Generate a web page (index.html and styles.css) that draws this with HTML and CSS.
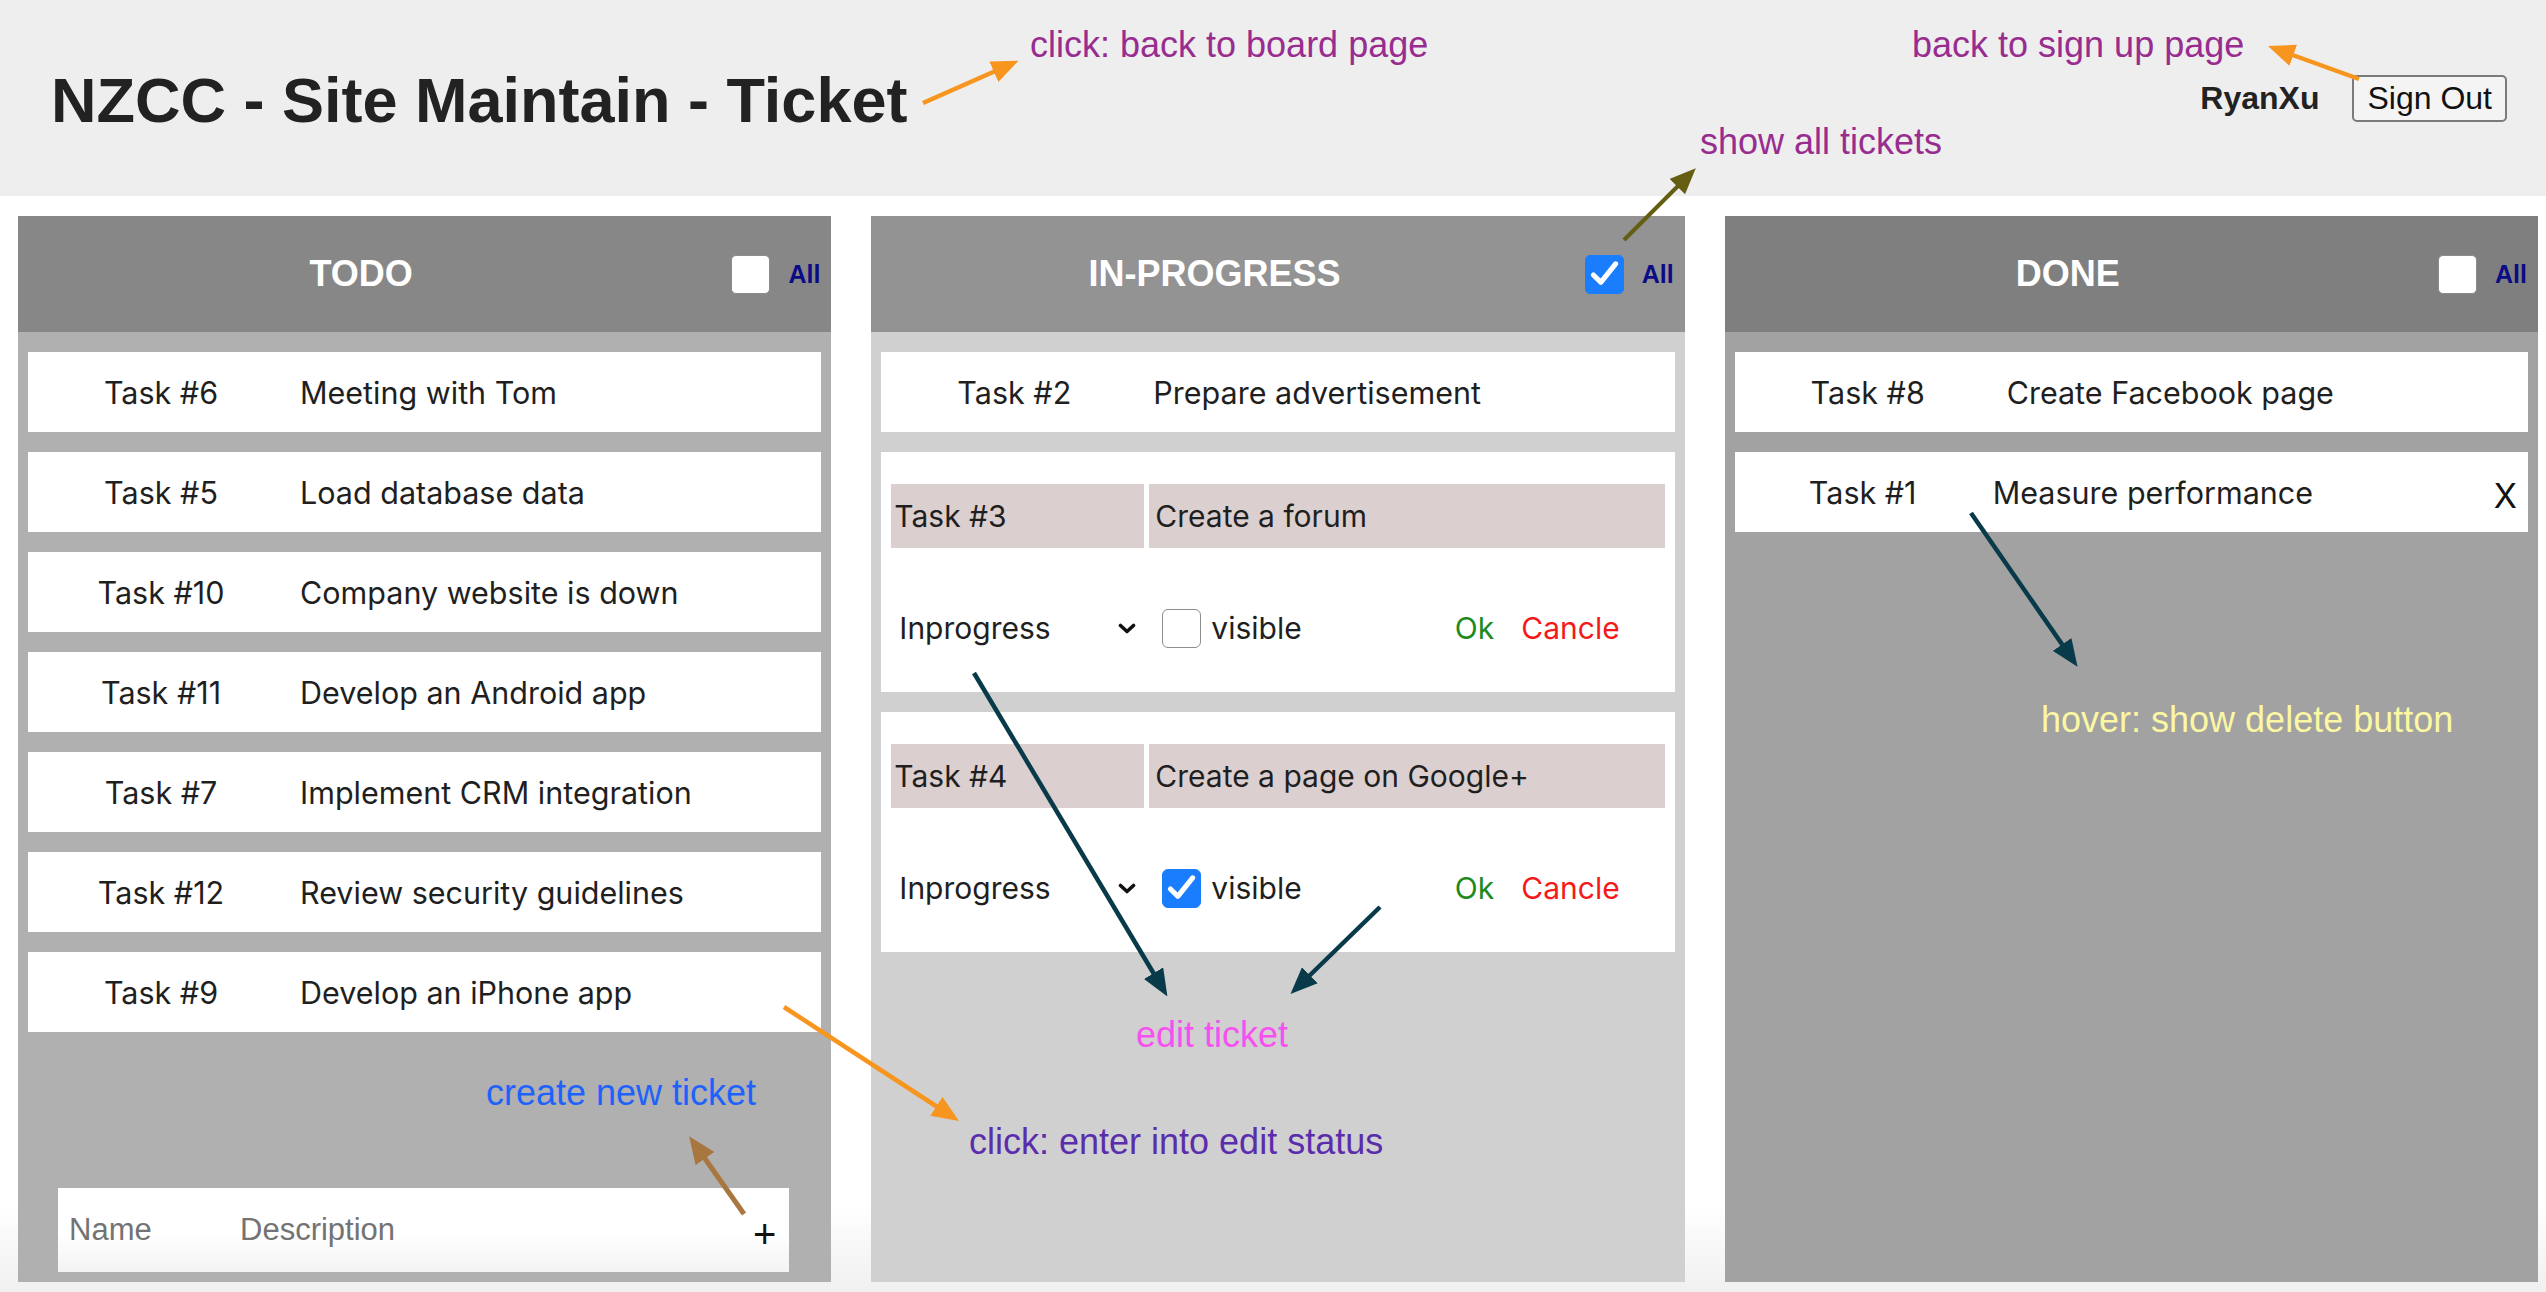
FILE: index.html
```html
<!DOCTYPE html>
<html lang="en">
<head>
<meta charset="utf-8">
<title>NZCC - Site Maintain - Ticket</title>
<link rel="stylesheet" href="styles.css">
</head>
<body>
<div class="page">
  <header class="topbar">
    <h1 class="brand">NZCC - Site Maintain - Ticket</h1>
    <div class="user">
      <span class="user-name">RyanXu</span>
      <button class="signout" type="button">Sign Out</button>
    </div>
  </header>

  <main class="board">
    <section class="column column-todo">
      <div class="column-head">
        <h2 class="column-title">TODO</h2>
        <span class="check"></span>
        <span class="all">All</span>
      </div>
      <div class="column-body">
        <div class="card"><span class="card-id">Task #6</span><span class="card-desc">Meeting with Tom</span></div>
        <div class="card"><span class="card-id">Task #5</span><span class="card-desc">Load database data</span></div>
        <div class="card"><span class="card-id">Task #10</span><span class="card-desc">Company website is down</span></div>
        <div class="card"><span class="card-id">Task #11</span><span class="card-desc">Develop an Android app</span></div>
        <div class="card"><span class="card-id">Task #7</span><span class="card-desc">Implement CRM integration</span></div>
        <div class="card"><span class="card-id">Task #12</span><span class="card-desc">Review security guidelines</span></div>
        <div class="card"><span class="card-id">Task #9</span><span class="card-desc">Develop an iPhone app</span></div>
        <form class="new-ticket">
          <input class="nt-name" type="text" placeholder="Name">
          <input class="nt-desc" type="text" placeholder="Description">
          <span class="nt-add">+</span>
        </form>
      </div>
    </section>

    <section class="column column-progress">
      <div class="column-head">
        <h2 class="column-title">IN-PROGRESS</h2>
        <span class="check is-checked"><svg viewBox="0 0 40 40" class="tick"><path d="M8 21 L16 29 L32 9" fill="none" stroke="#fff" stroke-width="5.5" stroke-linecap="round" stroke-linejoin="round"/></svg></span>
        <span class="all">All</span>
      </div>
      <div class="column-body">
        <div class="card"><span class="card-id">Task #2</span><span class="card-desc">Prepare advertisement</span></div>
        <div class="edit-card">
          <div class="edit-fields">
            <span class="field field-id">Task #3</span>
            <span class="field field-desc">Create a forum</span>
          </div>
          <div class="edit-actions">
            <span class="status-select">Inprogress<svg class="chev" viewBox="0 0 18 11"><path d="M2.5 2.5 L9 8.5 L15.5 2.5" fill="none" stroke="#111" stroke-width="3.6" stroke-linecap="round" stroke-linejoin="round"/></svg></span>
            <span class="box"></span>
            <span class="visible">visible</span>
            <span class="ok">Ok</span>
            <span class="cancel">Cancle</span>
          </div>
        </div>
        <div class="edit-card">
          <div class="edit-fields">
            <span class="field field-id">Task #4</span>
            <span class="field field-desc">Create a page on Google+</span>
          </div>
          <div class="edit-actions">
            <span class="status-select">Inprogress<svg class="chev" viewBox="0 0 18 11"><path d="M2.5 2.5 L9 8.5 L15.5 2.5" fill="none" stroke="#111" stroke-width="3.6" stroke-linecap="round" stroke-linejoin="round"/></svg></span>
            <span class="box is-checked"><svg viewBox="0 0 40 40" class="tick"><path d="M8 21 L16 29 L32 9" fill="none" stroke="#fff" stroke-width="5.5" stroke-linecap="round" stroke-linejoin="round"/></svg></span>
            <span class="visible">visible</span>
            <span class="ok">Ok</span>
            <span class="cancel">Cancle</span>
          </div>
        </div>
      </div>
    </section>

    <section class="column column-done">
      <div class="column-head">
        <h2 class="column-title">DONE</h2>
        <span class="check"></span>
        <span class="all">All</span>
      </div>
      <div class="column-body">
        <div class="card"><span class="card-id">Task #8</span><span class="card-desc">Create Facebook page</span></div>
        <div class="card is-hover"><span class="card-id">Task #1</span><span class="card-desc">Measure performance</span><span class="card-del">X</span></div>
      </div>
    </section>
  </main>

  <div class="notes">
    <span class="note note-board">click: back to board page</span>
    <span class="note note-signup">back to sign up page</span>
    <span class="note note-all">show all tickets</span>
    <span class="note note-create">create new ticket</span>
    <span class="note note-edit">edit ticket</span>
    <span class="note note-click">click: enter into edit status</span>
    <span class="note note-hover">hover: show delete button</span>
  </div>

  <svg class="arrows" width="2546" height="1292" viewBox="0 0 2546 1292">
    <defs>
      <marker id="h-orange" viewBox="0 0 12 10" refX="3" refY="5" markerWidth="6" markerHeight="5" orient="auto" markerUnits="strokeWidth"><path d="M0,0 L12,5 L0,10 z" fill="#f7951f"/></marker>
      <marker id="h-olive" viewBox="0 0 12 10" refX="3" refY="5" markerWidth="6.5" markerHeight="5.5" orient="auto" markerUnits="strokeWidth"><path d="M0,0 L12,5 L0,10 z" fill="#655e12"/></marker>
      <marker id="h-teal" viewBox="0 0 12 10" refX="3" refY="5" markerWidth="6" markerHeight="5" orient="auto" markerUnits="strokeWidth"><path d="M0,0 L12,5 L0,10 z" fill="#083a4a"/></marker>
      <marker id="h-brown" viewBox="0 0 12 10" refX="3" refY="5" markerWidth="5.5" markerHeight="4.6" orient="auto" markerUnits="strokeWidth"><path d="M0,0 L12,5 L0,10 z" fill="#a8773f"/></marker>
    </defs>
    <line x1="923" y1="103" x2="1000" y2="69" stroke="#f7951f" stroke-width="4.5" marker-end="url(#h-orange)"/>
    <line x1="2359" y1="79" x2="2287" y2="53" stroke="#f7951f" stroke-width="4.5" marker-end="url(#h-orange)"/>
    <line x1="1624" y1="240" x2="1682" y2="182" stroke="#655e12" stroke-width="4" marker-end="url(#h-olive)"/>
    <line x1="974" y1="673" x2="1157" y2="979" stroke="#083a4a" stroke-width="4.5" marker-end="url(#h-teal)"/>
    <line x1="1380" y1="907" x2="1305" y2="980" stroke="#083a4a" stroke-width="4.5" marker-end="url(#h-teal)"/>
    <line x1="1971" y1="513" x2="2066" y2="650" stroke="#083a4a" stroke-width="4.5" marker-end="url(#h-teal)"/>
    <line x1="784" y1="1007" x2="942" y2="1110" stroke="#f7951f" stroke-width="4.5" marker-end="url(#h-orange)"/>
    <line x1="744" y1="1214" x2="701" y2="1153" stroke="#a8773f" stroke-width="5" marker-end="url(#h-brown)"/>
  </svg>
</div>
</body>
</html>
```

FILE: styles.css
```css
* { box-sizing: border-box; }

html, body {
  margin: 0;
  padding: 0;
}

body {
  font-family: Inter, "Liberation Sans", sans-serif;
  background: #ffffff;
  color: #222222;
}

.page {
  position: relative;
  width: 2546px;
  height: 1292px;
  display: flex;
  flex-direction: column;
  overflow: hidden;
}

/* ---------- top bar ---------- */
.topbar {
  flex: none;
  height: 196px;
  background: #eeeeee;
  display: flex;
  align-items: center;
  justify-content: space-between;
  padding: 0 39px 0 51px;
}

.brand {
  margin: 4px 0 0;
  font: 700 63px/1 "Liberation Sans", Arial, sans-serif;
  color: #222222;
}

.user {
  display: flex;
  align-items: center;
  gap: 33px;
}

.user-name {
  font: 700 32px/1 "Liberation Sans", Arial, sans-serif;
  color: #222222;
}

.signout {
  height: 47px;
  padding: 0 13px;
  font: 400 32px/1 "Liberation Sans", Arial, sans-serif;
  color: #111111;
  background: #f4f4f4;
  border: 2px solid #7b7b7b;
  border-radius: 5px;
}

/* ---------- board ---------- */
.board {
  flex: 1;
  display: grid;
  grid-template-columns: repeat(3, 1fr);
  column-gap: 40px;
  padding: 20px 8px 10px 18px;
  background: linear-gradient(to bottom, #ffffff 92%, #f0f0f0 100%);
}

.column {
  display: flex;
  flex-direction: column;
  min-height: 0;
}

.column-head {
  flex: none;
  height: 116px;
  display: flex;
  align-items: center;
  padding-right: 11px;
}

.column-todo .column-head { background: #878787; }
.column-progress .column-head { background: #939393; }
.column-done .column-head { background: #7f7f7f; }

.column-title {
  flex: 1;
  margin: 0;
  text-align: center;
  font: 700 36px/1 "Liberation Sans", Arial, sans-serif;
  color: #ffffff;
}

.check {
  width: 39px;
  height: 39px;
  margin-left: 27px;
  border-radius: 5px;
  background: #ffffff;
  border: 1px solid #8c8c8c;
  display: flex;
  align-items: center;
  justify-content: center;
}

.check.is-checked,
.box.is-checked {
  background: #1a7dfd;
  border-color: #1a7dfd;
}

.tick {
  width: 38px;
  height: 38px;
}

.all {
  margin-left: 18px;
  font: 700 25px/1 "Liberation Sans", Arial, sans-serif;
  color: #0b0b86;
}

.column-body {
  flex: 1;
  display: flex;
  flex-direction: column;
  gap: 20px;
  padding: 20px 10px 10px;
}

.column-todo .column-body { background: #b0b0b0; }
.column-progress .column-body { background: #d0d0d0; }
.column-done .column-body { background: #a2a2a2; }

/* ---------- cards ---------- */
.card {
  flex: none;
  height: 80px;
  background: #ffffff;
  display: flex;
  align-items: center;
  font-size: 30.5px;
  color: #1f1f1f;
}

.card-id {
  flex: none;
  width: 266px;
  text-align: center;
}

.card-desc {
  padding-left: 6px;
}

.card.is-hover .card-id { width: 256px; }
.card.is-hover .card-desc { padding-left: 2px; }

.card-del {
  margin-left: auto;
  padding-right: 11px;
  font-size: 34px;
  color: #111111;
  padding-top: 6px;
}

/* ---------- edit card ---------- */
.edit-card {
  flex: none;
  height: 240px;
  background: #ffffff;
  padding: 32px 10px 0;
  font-size: 30px;
  color: #1f1f1f;
}

.edit-fields {
  display: flex;
  gap: 5px;
  height: 64px;
}

.field {
  display: flex;
  align-items: center;
  background: #dccfcf;
}

.field-id {
  flex: none;
  width: 253px;
  padding-left: 3px;
}

.field-desc {
  flex: 1;
  padding-left: 6px;
}

.edit-actions {
  display: flex;
  align-items: center;
  height: 64px;
  margin-top: 48px;
  padding: 0 45px 0 8px;
}

.status-select {
  flex: none;
  width: 245px;
  display: flex;
  align-items: center;
  justify-content: space-between;
  padding-right: 8px;
}

.chev {
  width: 18px;
  height: 11px;
}

.box {
  flex: none;
  width: 39px;
  height: 39px;
  margin-left: 18px;
  border: 1.5px solid #8e8e8e;
  border-radius: 6px;
  background: #ffffff;
  display: flex;
  align-items: center;
  justify-content: center;
}

.visible {
  margin-left: 10px;
}

.ok {
  margin-left: auto;
  color: #1d8a1d;
}

.cancel {
  margin-left: 27px;
  color: #f51a1a;
}

/* ---------- new ticket ---------- */
.new-ticket {
  flex: none;
  margin: auto 32px 0 30px;
  height: 84px;
  display: flex;
  align-items: center;
  padding: 0 13px 0 11px;
  background: linear-gradient(to bottom, #ffffff 55%, #f3f3f3 100%);
}

.new-ticket input {
  border: none;
  outline: none;
  background: transparent;
  padding: 0;
  margin: 0;
  font: 400 31px "Liberation Sans", Arial, sans-serif;
  color: #333333;
}

.new-ticket input::placeholder {
  color: #737373;
}

.nt-name {
  flex: none;
  width: 171px;
}

.nt-desc {
  flex: 1;
  min-width: 0;
}

.nt-add {
  font: 400 40px/1 "Liberation Sans", Arial, sans-serif;
  color: #111111;
  padding-top: 8px;
}

/* ---------- annotations ---------- */
.notes {
  position: absolute;
  inset: 0;
  pointer-events: none;
}

.note {
  position: absolute;
  white-space: nowrap;
  font: 400 36px/36px "Liberation Sans", Arial, sans-serif;
}

.note-board  { left: 1030px; top: 27px;   color: #982c8f; }
.note-signup { left: 1912px; top: 27px;   color: #982c8f; }
.note-all    { left: 1700px; top: 124px;  color: #982c8f; }
.note-create { left: 486px;  top: 1075px; color: #1e62fb; }
.note-edit   { left: 1136px; top: 1017px; color: #f84ff0; }
.note-click  { left: 969px;  top: 1124px; color: #5a2dac; }
.note-hover  { left: 2041px; top: 702px;  color: #fbf7a2; }

.arrows {
  position: absolute;
  left: 0;
  top: 0;
  pointer-events: none;
}
```
